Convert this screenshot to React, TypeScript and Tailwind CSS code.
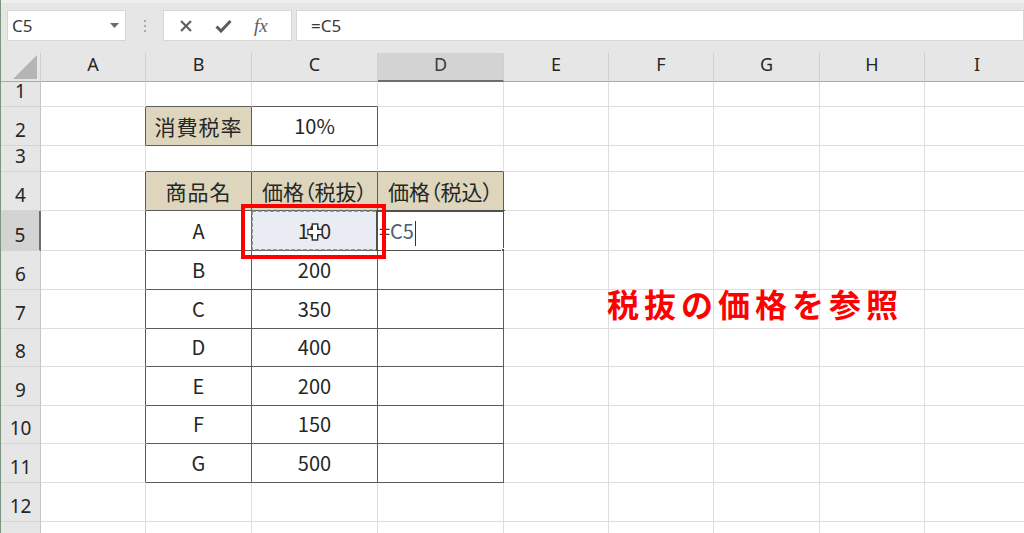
import React from "react";

const COLS = ["A", "B", "C", "D", "E", "F", "G", "H", "I"];
const ROWS = [1, 2, 3, 4, 5, 6, 7, 8, 9, 10, 11, 12, 13];

type Cell = { text: string; head?: boolean; size?: string };

const cells: Record<string, Cell> = {
  "2-1": { text: "消費税率", head: true, size: "text-[21px] tracking-[1px]" },
  "2-2": { text: "10%" },
  "4-1": { text: "商品名", head: true, size: "text-[21px] tracking-[1px]" },
  "4-2": { text: "価格（税抜）", head: true, size: "text-[21px] [font-feature-settings:'palt']" },
  "4-3": { text: "価格（税込）", head: true, size: "text-[21px] [font-feature-settings:'palt']" },
};

const items: [string, string][] = [
  ["A", "100"],
  ["B", "200"],
  ["C", "350"],
  ["D", "400"],
  ["E", "200"],
  ["F", "150"],
  ["G", "500"],
];
items.forEach(([name, price], i) => {
  cells[`${5 + i}-1`] = { text: name };
  cells[`${5 + i}-2`] = { text: price };
});

function inTable(r: number, c: number) {
  if (r === 2) return c === 1 || c === 2;
  return r >= 4 && r <= 11 && c >= 1 && c <= 3;
}

function FormulaBar() {
  return (
    <div className="h-[53px] bg-[#e6e6e6] border-t-[3px] border-[#eeeeee] pt-[7px] pl-[6px] flex items-start">
      <div className="w-[119px] h-[31px] bg-white border border-[#d6d6d6] flex items-center justify-between pl-[4px] pr-[6px]">
        <span className="text-[17px] text-[#3a3a3a]">C5</span>
        <svg width="9" height="5" viewBox="0 0 9 5">
          <path d="M0 0 H9 L4.5 5 Z" fill="#6a6a6a" />
        </svg>
      </div>
      <div className="w-[37px] h-[31px] flex flex-col items-center justify-center gap-[3px]">
        <span className="w-[2px] h-[2px] bg-[#a8a8a8]" />
        <span className="w-[2px] h-[2px] bg-[#a8a8a8]" />
        <span className="w-[2px] h-[2px] bg-[#a8a8a8]" />
      </div>
      <div className="w-[129px] h-[31px] bg-white border border-[#d6d6d6] flex items-center pl-[15px] gap-[22px]">
        <svg width="14" height="14" viewBox="0 0 14 14">
          <path d="M2 2 L12 12 M12 2 L2 12" stroke="#5c5c5c" strokeWidth="2" />
        </svg>
        <svg width="17" height="14" viewBox="0 0 17 14">
          <path d="M1.5 7.5 L6 12 L15.5 2" stroke="#5c5c5c" strokeWidth="3" fill="none" />
        </svg>
        <span className="font-['Liberation_Serif',serif] italic text-[19px] text-[#5c5c5c] leading-none">fx</span>
      </div>
      <div className="flex-1 ml-[4px] h-[31px] bg-white border border-[#d6d6d6] flex items-center pl-[14px]">
        <span className="text-[17px] text-[#3a3a3a]">=C5</span>
      </div>
    </div>
  );
}

function HeaderRow() {
  return (
    <>
      <div className="bg-[#e6e6e6] border-r border-r-[#cfcfcf] border-b border-b-[#a8a8a8] flex items-end justify-end pr-[3px] pb-[2px]">
        <svg width="24" height="24" viewBox="0 0 24 24">
          <path d="M24 0 V24 H0 Z" fill="#b5b5b5" />
        </svg>
      </div>
      {COLS.map((c) =>
        c === "D" ? (
          <div
            key={c}
            className="bg-[#d3d3d3] border-r border-r-[#cfcfcf] border-b-2 border-b-[#6e6e6e] flex items-end justify-center pb-[2px] text-[18px] text-[#3a3a3a]"
          >
            {c}
          </div>
        ) : (
          <div
            key={c}
            className="bg-[#e6e6e6] border-r border-r-[#cfcfcf] border-b border-b-[#a8a8a8] flex items-end justify-center pb-[3px] text-[18px] text-[#262626]"
          >
            {c}
          </div>
        )
      )}
    </>
  );
}

function C5Extras() {
  return (
    <>
      <svg className="absolute -left-[1px] -top-[1px]" width="127" height="41" viewBox="0 0 127 41">
        <rect x="1" y="1" width="125" height="39" fill="none" stroke="#718079" strokeWidth="1.5" strokeDasharray="4 2" />
      </svg>
      <svg className="absolute left-[55px] top-[12px] z-10" width="16" height="18" viewBox="-1 -1 18 20">
        <path d="M5 0 H11 V6 H16 V12 H11 V18 H5 V12 H0 V6 H5 Z" fill="#ffffff" stroke="#333333" strokeWidth="1.5" />
      </svg>
      <div className="absolute -left-[11px] -top-[7px] w-[145px] h-[55px] border-4 border-[#ff0000] z-20" />
    </>
  );
}

function D5Extras() {
  return (
    <>
      <div className="absolute -left-[2px] -top-[1px] w-[129px] h-[42px] border-2 border-[#505050]" />
      <div className="absolute left-[123px] top-[37px] w-[6px] h-[6px] bg-[#505050] border border-white" />
    </>
  );
}

function Grid() {
  return (
    <div className="grid grid-cols-[40px_105px_106px_126px_126px_105px_105px_106px_105px_105px] grid-rows-[29px_25px_39px_26px_39px_40px_39px_39px_38px_39px_38px_39px_39px_40px]">
      <HeaderRow />
      {ROWS.map((r) => (
        <React.Fragment key={r}>
          {r === 5 ? (
            <div className="bg-[#d3d3d3] border-r-2 border-r-[#6e6e6e] border-b border-b-[#d4d4d4] flex items-end justify-center pb-[5px] text-[19px] leading-[19px] text-[#262626]">
              {r}
            </div>
          ) : (
            <div className="bg-[#e6e6e6] border-r border-r-[#c4c4c4] border-b border-b-[#d4d4d4] flex items-end justify-center pb-[5px] text-[19px] leading-[19px] text-[#262626]">
              {r}
            </div>
          )}
          {COLS.map((_, c) => {
            const cell = cells[`${r}-${c}`];
            const rightDark = inTable(r, c) || inTable(r, c + 1);
            const bottomDark = inTable(r, c) || inTable(r + 1, c);
            const br = rightDark ? "border-r-[#5c5c5c]" : "border-r-[#dedede]";
            const bb = bottomDark ? "border-b-[#5c5c5c]" : "border-b-[#dedede]";
            const bg = cell?.head
              ? "bg-[#ddd6bd]"
              : r === 5 && c === 2
              ? "bg-[#e9ecf2]"
              : "bg-white";
            return (
              <div
                key={c}
                className={`relative border-r border-b ${br} ${bb} ${bg} flex items-end pb-[8px] whitespace-nowrap font-['Noto_Sans_CJK_JP',sans-serif] text-[#262626] ${
                  r === 5 && c === 3 ? "justify-start pl-[1px]" : "justify-center"
                } ${cell?.size ?? "text-[20px]"} leading-[22px]`}
              >
                {cell?.text}
                {r === 5 && c === 3 && (
                  <>
                    <span className="text-[#3b3b3b]">=</span>
                    <span className="text-[#4a6275]">C5</span>
                    <span className="ml-[1px] mb-[-4px] w-[1px] h-[25px] bg-[#333333]" />
                  </>
                )}
                {r === 5 && c === 2 && <C5Extras />}
                {r === 5 && c === 3 && <D5Extras />}
              </div>
            );
          })}
        </React.Fragment>
      ))}
    </div>
  );
}

export default function App() {
  return (
    <div className="relative w-[1024px] h-[533px] overflow-hidden bg-white border-l border-[#7d9580] font-['Noto_Sans',sans-serif]">
      <FormulaBar />
      <Grid />
      <div className="absolute left-[606px] top-[283px] text-[32px] leading-[40px] font-bold tracking-[5px] text-[#ff0000] font-['Noto_Sans_CJK_JP',sans-serif] whitespace-nowrap">
        税抜の価格を参照
      </div>
    </div>
  );
}
